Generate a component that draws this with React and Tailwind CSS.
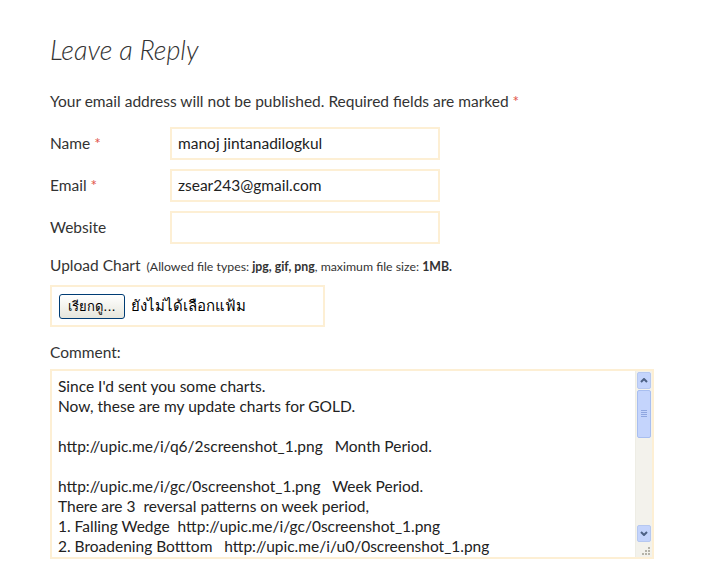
import React from "react";

const lines = [
  "Since I'd sent you some charts.",
  "Now, these are my update charts for GOLD.",
  "",
  "http://upic.me/i/q6/2screenshot_1.png   Month Period.",
  "",
  "http://upic.me/i/gc/0screenshot_1.png   Week Period.",
  "There are 3  reversal patterns on week period,",
  "1. Falling Wedge  http://upic.me/i/gc/0screenshot_1.png",
  "2. Broadening Botttom   http://upic.me/i/u0/0screenshot_1.png",
];

const Field = ({ label, required, value }) => (
  <div className="flex items-center h-[33px] mb-[9px]">
    <label className="w-[120px] text-[15.5px] text-[#333]">
      {label}
      {required && <span className="text-[#e2574c]"> *</span>}
    </label>
    <div className="w-[270px] h-[33px] border-2 border-[#fdefd4] bg-white flex items-center px-[6px] text-[15.5px] text-[#222]">
      {value}
    </div>
  </div>
);

const App = () => {
  return (
    <div
      className="min-h-screen bg-white pl-[50px] pt-[34px] text-[#333]"
      style={{ fontFamily: "Lato, 'Open Sans', sans-serif" }}
    >
      <h3 className="text-[27px] font-light italic text-[#333] leading-[32px]">Leave a Reply</h3>

      <p className="text-[15.5px] mt-[25px] leading-[20px]">
        Your email address will not be published. Required fields are marked{" "}
        <span className="text-[#e2574c]">*</span>
      </p>

      <div className="mt-[16px]">
        <Field label="Name" required value="manoj jintanadilogkul" />
        <Field label="Email" required value="zsear243@gmail.com" />
        <Field label="Website" value="" />
      </div>

      <div className="mt-[10px] flex items-baseline">
        <span className="text-[15.5px]">Upload Chart</span>
        <span className="text-[12.3px] ml-[6px] text-[#333]">
          (Allowed file types: <b>jpg, gif, png</b>, maximum file size: <b>1MB.</b>
        </span>
      </div>

      <div className="mt-[8px] w-[275px] h-[42px] border-2 border-[#fdefd4] flex items-center pl-[7px]">
        <button
          className="h-[25px] w-[66px] rounded-[3px] border border-[#003c74] bg-gradient-to-b from-white to-[#e6e6dc] text-[13px] text-black leading-none"
          style={{ fontFamily: "Tahoma, 'DejaVu Sans', 'Noto Sans', sans-serif" }}
        >
          เรียกดู...
        </button>
        <span
          className="ml-[6px] text-[15px] text-black"
          style={{ fontFamily: "Tahoma, 'DejaVu Sans', 'Noto Sans', sans-serif" }}
        >
          ยังไม่ได้เลือกแฟ้ม
        </span>
      </div>

      <div className="mt-[14px] text-[15.5px]">Comment:</div>

      <div className="mt-[4px] w-[604px] h-[190px] border-2 border-[#fdefd4] flex bg-white">
        <div className="flex-1 overflow-hidden pl-[6px] pt-[5px] text-[15.5px] leading-[20px] text-[#222] whitespace-pre">
          {lines.map((l, i) => (
            <div key={i} className="h-[20px]">{l}</div>
          ))}
        </div>
        <div className="w-[17px] flex flex-col bg-[#f3f2ec] border-l border-[#eeede5]">
          <div className="h-[17px] m-[1px] rounded-[2px] border border-[#b6c8f0] bg-[#c4d4fc] flex items-center justify-center">
            <svg width="8" height="5" viewBox="0 0 8 5"><path d="M1 4 L4 1 L7 4" stroke="#4d6185" strokeWidth="2" fill="none" /></svg>
          </div>
          <div className="h-[48px] mx-[1px] rounded-[2px] border border-[#a8bef0] bg-[#c4d4fc] flex items-center justify-center">
            <div className="flex flex-col gap-[1px]">
              <div className="w-[6px] h-[1px] bg-[#8fa6e0]" />
              <div className="w-[6px] h-[1px] bg-[#8fa6e0]" />
              <div className="w-[6px] h-[1px] bg-[#8fa6e0]" />
              <div className="w-[6px] h-[1px] bg-[#8fa6e0]" />
            </div>
          </div>
          <div className="flex-1" />
          <div className="h-[17px] m-[1px] rounded-[2px] border border-[#b6c8f0] bg-[#c4d4fc] flex items-center justify-center">
            <svg width="8" height="5" viewBox="0 0 8 5"><path d="M1 1 L4 4 L7 1" stroke="#4d6185" strokeWidth="2" fill="none" /></svg>
          </div>
          <div className="h-[14px] flex items-end justify-end pr-[2px] pb-[2px]">
            <svg width="8" height="8" viewBox="0 0 8 8" fill="#b5b3a8">
              <rect x="6" y="0" width="2" height="2" />
              <rect x="3" y="3" width="2" height="2" />
              <rect x="6" y="3" width="2" height="2" />
              <rect x="0" y="6" width="2" height="2" />
              <rect x="3" y="6" width="2" height="2" />
              <rect x="6" y="6" width="2" height="2" />
            </svg>
          </div>
        </div>
      </div>
    </div>
  );
};

export default App;
